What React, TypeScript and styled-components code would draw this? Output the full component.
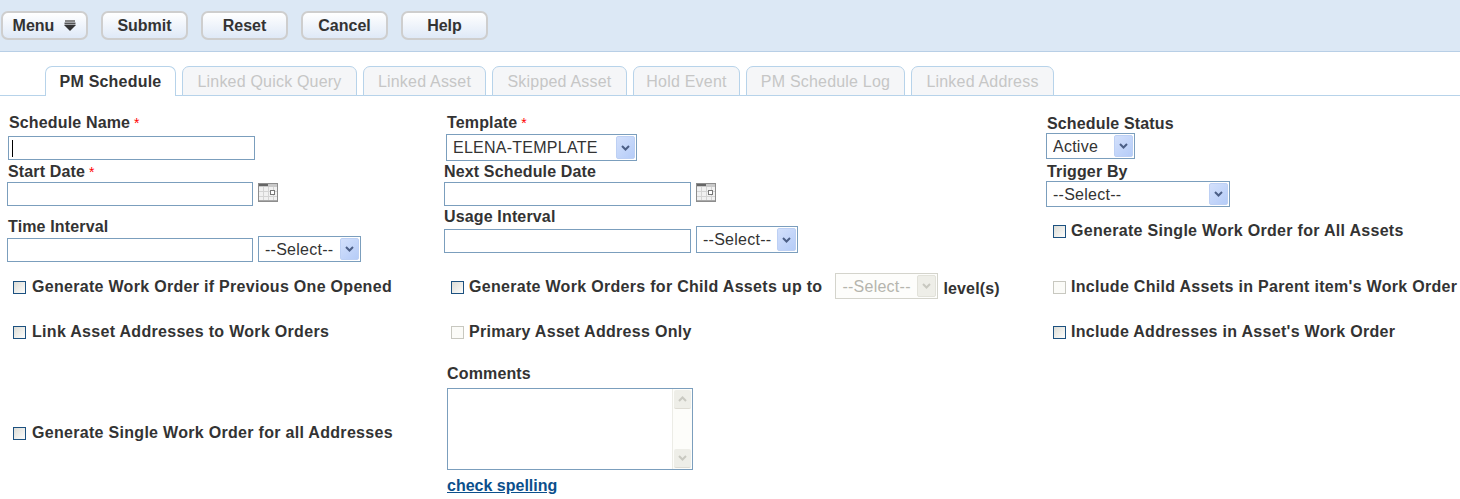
import React from 'react'
import styled, { createGlobalStyle } from 'styled-components'

const GlobalStyle = createGlobalStyle`
  html, body {
    margin: 0;
    padding: 0;
    background: #fff;
  }
  body {
    font-family: "Liberation Sans", Arial, sans-serif;
    color: #333;
    overflow: hidden;
  }
`

const Page = styled.div`
  width: 1460px;
  height: 499px;
  overflow: hidden;
`

const Toolbar = styled.div`
  display: flex;
  gap: 13px;
  height: 40px;
  padding: 11px 0 0 1px;
  background: #dce8f5;
  border-bottom: 1px solid #b8cfe6;
`

const ToolButton = styled.button`
  display: flex;
  align-items: center;
  justify-content: center;
  gap: 10px;
  width: 87px;
  height: 29px;
  padding: 0;
  box-sizing: border-box;
  border: 2px solid #cecece;
  border-radius: 7px;
  background: linear-gradient(#ffffff, #dfe9f7);
  font: bold 16px "Liberation Sans", Arial, sans-serif;
  color: #333;
`

const TabBar = styled.div`
  display: flex;
  gap: 6px;
  margin-top: 14px;
  height: 29px;
  padding-left: 45px;
  border-bottom: 1px solid #b7d3ea;
`

const Tab = styled.div<{ $active?: boolean; $width: number }>`
  display: flex;
  align-items: center;
  justify-content: center;
  flex: none;
  width: ${p => p.$width}px;
  height: 30px;
  padding-top: ${p => (p.$active ? 0 : 2)}px;
  box-sizing: border-box;
  border: 1px solid #b7d3ea;
  border-bottom: ${p => (p.$active ? 'none' : '1px solid #b7d3ea')};
  border-radius: 7px 7px 0 0;
  background: ${p => (p.$active ? '#fff' : '#f5f6f8')};
  color: ${p => (p.$active ? '#333' : '#c6c6c6')};
  font-size: 16px;
  font-weight: ${p => (p.$active ? 'bold' : 'normal')};
  letter-spacing: 0.2px;
`

const Form = styled.div`
  display: grid;
  grid-template-columns: 437px 602px 1fr;
  padding: 17px 0 0 7px;
`

const Column = styled.div`
  display: flex;
  flex-direction: column;
  align-items: flex-start;
`

const Label = styled.div<{ $top?: number; $left?: number; $gap?: number }>`
  height: 18px;
  line-height: 20px;
  margin: ${p => p.$top ?? 0}px 0 ${p => p.$gap ?? 2}px ${p => p.$left ?? 0}px;
  font-size: 16px;
  font-weight: bold;
  letter-spacing: 0.15px;
  white-space: nowrap;
`

const Required = styled.span`
  color: #f00;
  font-size: 14px;
  font-weight: normal;
  margin-left: 4px;
`

const Controls = styled.div`
  display: flex;
  align-items: flex-end;
  gap: 5px;
`

const TextBox = styled.div<{ $width: number; $left?: number }>`
  position: relative;
  display: flex;
  width: ${p => p.$width}px;
  margin-left: ${p => p.$left ?? 0}px;
`

const TextInput = styled.input`
  width: 100%;
  height: 24px;
  padding: 0 4px;
  box-sizing: border-box;
  border: 1px solid #7b9ebd;
  outline: none;
  background: #fff;
  font: 16px "Liberation Sans", Arial, sans-serif;
`

const Caret = styled.span`
  position: absolute;
  left: 4px;
  top: 4px;
  width: 1px;
  height: 17px;
  background: #000;
`

const SelectBox = styled.div<{ $width: number; $height?: number; $left?: number }>`
  position: relative;
  flex: none;
  width: ${p => p.$width}px;
  height: ${p => p.$height ?? 27}px;
  margin-left: ${p => p.$left ?? 0}px;
`

const NativeSelect = styled.select<{ $disabled?: boolean }>`
  appearance: none;
  width: 100%;
  height: 100%;
  padding: 0 0 0 6px;
  box-sizing: border-box;
  border: 1px solid ${p => (p.$disabled ? '#d4d4cc' : '#7b9ebd')};
  border-radius: 0;
  outline: none;
  opacity: 1;
  background: ${p => (p.$disabled ? '#fdfdfb' : '#fff')};
  color: ${p => (p.$disabled ? '#b5b5ad' : '#333')};
  font: 16px "Liberation Sans", Arial, sans-serif;
  letter-spacing: 0.25px;
`

const SelectArrow = styled.span<{ $disabled?: boolean }>`
  position: absolute;
  top: 2px;
  right: 2px;
  bottom: 2px;
  width: 19px;
  display: flex;
  align-items: center;
  justify-content: center;
  border-radius: 2px;
  background: ${p =>
    p.$disabled ? '#eeeee8' : 'linear-gradient(135deg, #d3e0fb, #b5ccf8)'};
  border: 1px solid ${p => (p.$disabled ? '#e2e2da' : '#bdd0f4')};
  box-sizing: border-box;
  color: ${p => (p.$disabled ? '#c8c8c0' : '#4c5f86')};
`

const CalendarButton = styled.svg`
  display: block;
  margin-bottom: 4px;
`

const CheckRow = styled.label<{ $top: number; $left?: number; $gap?: number }>`
  display: flex;
  align-items: center;
  min-height: 18px;
  margin: ${p => p.$top}px 0 0 ${p => p.$left ?? 6}px;
  gap: ${p => p.$gap ?? 5}px;
  font-size: 16px;
  font-weight: bold;
  letter-spacing: 0.3px;
  white-space: nowrap;
`

const CheckBox = styled.span<{ $disabled?: boolean }>`
  width: 13px;
  height: 13px;
  box-sizing: border-box;
  flex: none;
  border: 1px solid ${p => (p.$disabled ? '#c8c8c0' : '#1c5180')};
  background: ${p =>
    p.$disabled ? '#fbfbf8' : 'linear-gradient(135deg, #dcdcd6, #fdfdfb)'};
`

const ChildLevels = styled.div`
  display: flex;
  align-items: center;
  margin: 20px 0 0 7px;
`

const LevelText = styled.span`
  font-size: 16px;
  font-weight: bold;
  margin: 6px 0 0 5px;
  letter-spacing: 0.15px;
`

const CommentBox = styled.div`
  position: relative;
  display: flex;
  width: 246px;
  height: 82px;
  margin-left: 3px;
`

const CommentInput = styled.textarea`
  width: 100%;
  height: 100%;
  box-sizing: border-box;
  border: 1px solid #7b9ebd;
  outline: none;
  resize: none;
  overflow: hidden;
  background: #fff;
`

const ScrollTrack = styled.div`
  position: absolute;
  top: 1px;
  right: 1px;
  bottom: 1px;
  width: 20px;
  display: flex;
  flex-direction: column;
  justify-content: space-between;
  align-items: center;
  padding: 1px 0;
  box-sizing: border-box;
  background: #fdfdfa;
  border-left: 1px solid #ecece6;
`

const ScrollButton = styled.span`
  display: flex;
  align-items: center;
  justify-content: center;
  width: 17px;
  height: 19px;
  border-radius: 2px;
  background: #eeeee8;
  border-bottom: 1px solid #dedcd4;
  box-sizing: border-box;
  color: #c9c9c1;
`

const SpellLink = styled.a`
  margin: 7px 0 0 3px;
  line-height: 18px;
  font-size: 16px;
  font-weight: bold;
  color: #0b4f8c;
  text-decoration: underline;
`

const Chevron = ({ up }: { up?: boolean }) => (
  <svg width="9" height="6" viewBox="0 0 9 6">
    <path
      d={up ? 'M1 5 L4.5 1.5 L8 5' : 'M1 1 L4.5 4.5 L8 1'}
      fill="none"
      stroke="currentColor"
      strokeWidth="2"
    />
  </svg>
)

const MenuIcon = () => (
  <svg width="12" height="11" viewBox="0 0 12 11">
    <rect x="1" y="0" width="10" height="2" fill="#888" />
    <rect x="0.5" y="2.5" width="11" height="2" fill="#555" />
    <path d="M0 5 H12 L6 11 Z" fill="#333" />
  </svg>
)

const CalendarIcon = () => (
  <CalendarButton width="20" height="19" viewBox="0 0 20 19">
    <rect x="0.5" y="0.5" width="19" height="18" fill="#f1f1f1" stroke="#8d8d8d" />
    <rect x="1" y="1" width="18" height="3" fill="#c9c9c9" />
    <rect x="1" y="1" width="9" height="2" fill="#666" />
    <path
      d="M5.5 4V18M10.5 4V18M15.5 4V18M1 8.5H19M1 13.5H19"
      stroke="#d4d4d4"
      fill="none"
    />
    <rect x="12.5" y="7.5" width="4" height="4" fill="#fff" stroke="#777" />
    <rect x="1" y="17" width="18" height="1" fill="#aaa" />
  </CalendarButton>
)

const Select = ({
  value,
  width,
  height,
  left,
  disabled,
}: {
  value: string
  width: number
  height?: number
  left?: number
  disabled?: boolean
}) => (
  <SelectBox $width={width} $height={height} $left={left}>
    <NativeSelect $disabled={disabled} disabled={disabled} defaultValue={value}>
      <option>{value}</option>
    </NativeSelect>
    <SelectArrow $disabled={disabled}>
      <Chevron />
    </SelectArrow>
  </SelectBox>
)

const tabs = [
  { name: 'Linked Quick Query', width: 175 },
  { name: 'Linked Asset', width: 123 },
  { name: 'Skipped Asset', width: 135 },
  { name: 'Hold Event', width: 107 },
  { name: 'PM Schedule Log', width: 159 },
  { name: 'Linked Address', width: 143 },
]

function App() {
  return (
    <Page>
      <GlobalStyle />
      <Toolbar>
        <ToolButton>
          Menu
          <MenuIcon />
        </ToolButton>
        <ToolButton>Submit</ToolButton>
        <ToolButton>Reset</ToolButton>
        <ToolButton>Cancel</ToolButton>
        <ToolButton>Help</ToolButton>
      </Toolbar>
      <TabBar>
        <Tab $active $width={131}>
          PM Schedule
        </Tab>
        {tabs.map(tab => (
          <Tab key={tab.name} $width={tab.width}>
            {tab.name}
          </Tab>
        ))}
      </TabBar>
      <Form>
        <Column>
          <Label $left={2} $gap={5}>
            Schedule Name<Required>*</Required>
          </Label>
          <TextBox $width={247} $left={1}>
            <TextInput />
            <Caret />
          </TextBox>
          <Label $top={2} $left={1}>
            Start Date<Required>*</Required>
          </Label>
          <Controls>
            <TextBox $width={246}>
              <TextInput />
            </TextBox>
            <CalendarIcon />
          </Controls>
          <Label $top={11} $left={1} $gap={1}>
            Time Interval
          </Label>
          <Controls>
            <TextBox $width={246}>
              <TextInput />
            </TextBox>
            <Select value="--Select--" width={103} height={26} />
          </Controls>
          <CheckRow $top={16} $gap={6}>
            <CheckBox />
            Generate Work Order if Previous One Opened
          </CheckRow>
          <CheckRow $top={27} $gap={6}>
            <CheckBox />
            Link Asset Addresses to Work Orders
          </CheckRow>
          <CheckRow $top={83} $gap={6}>
            <CheckBox />
            Generate Single Work Order for all Addresses
          </CheckRow>
        </Column>
        <Column>
          <Label $left={3} $gap={3}>
            Template<Required>*</Required>
          </Label>
          <Select value="ELENA-TEMPLATE" width={191} left={2} />
          <Label $top={1}>Next Schedule Date</Label>
          <Controls>
            <TextBox $width={247}>
              <TextInput />
            </TextBox>
            <CalendarIcon />
          </Controls>
          <Label $top={1} $gap={1}>
            Usage Interval
          </Label>
          <Controls>
            <TextBox $width={247}>
              <TextInput />
            </TextBox>
            <Select value="--Select--" width={102} height={27} />
          </Controls>
          <ChildLevels>
            <CheckRow $top={2} $left={0}>
              <CheckBox />
              Generate Work Orders for Child Assets up to
            </CheckRow>
            <Select value="--Select--" width={103} height={26} left={13} disabled />
            <LevelText>level(s)</LevelText>
          </ChildLevels>
          <CheckRow $top={24} $left={7}>
            <CheckBox $disabled />
            Primary Asset Address Only
          </CheckRow>
          <Label $top={23} $left={3} $gap={6}>
            Comments
          </Label>
          <CommentBox>
            <CommentInput />
            <ScrollTrack>
              <ScrollButton>
                <Chevron up />
              </ScrollButton>
              <ScrollButton>
                <Chevron />
              </ScrollButton>
            </ScrollTrack>
          </CommentBox>
          <SpellLink href="#">check spelling</SpellLink>
        </Column>
        <Column>
          <Label $top={1} $left={1} $gap={1}>
            Schedule Status
          </Label>
          <Select value="Active" width={89} height={26} />
          <Label $top={3} $left={1} $gap={1}>
            Trigger By
          </Label>
          <Select value="--Select--" width={184} height={26} />
          <CheckRow $top={15} $left={7}>
            <CheckBox />
            Generate Single Work Order for All Assets
          </CheckRow>
          <CheckRow $top={38} $left={7}>
            <CheckBox $disabled />
            Include Child Assets in Parent item's Work Order
          </CheckRow>
          <CheckRow $top={27} $left={7}>
            <CheckBox />
            Include Addresses in Asset's Work Order
          </CheckRow>
        </Column>
      </Form>
    </Page>
  )
}

export default App
